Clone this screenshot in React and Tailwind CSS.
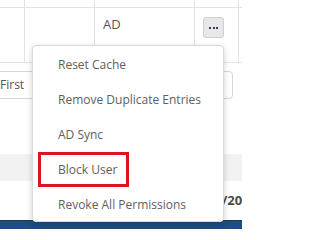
import React from "react"

const menuItems = ['Reset Cache', 'Remove Duplicate Entries', 'AD Sync', 'Block User', 'Revoke All Permissions']

function ActionsMenu() {
    return (
        <div className="absolute left-[32px] top-[45px] w-[192px] h-[177px] bg-white border border-[#d9d9d9] rounded-[4px] shadow-[0_2px_6px_rgba(0,0,0,0.18)] py-[1px]">
            {menuItems.map((label) => (
                <div key={label} className="h-[35px] flex items-center text-[12px] text-[#606060] whitespace-nowrap">
                    {label === 'Block User' ? (
                        <span className="ml-[5px] w-[91px] h-[35px] border-[3px] border-[#e0141e] flex items-center pl-[17px]">{label}</span>
                    ) : (
                        <span className="pl-[25px]">{label}</span>
                    )}
                </div>
            ))}
        </div>
    )
}

export default function App() {
    return (
        <main className="relative w-[242px] h-[229px] overflow-hidden bg-white font-['Open_Sans',sans-serif]">
            {/* table header edge */}
            <div className="flex h-[8px] border-b border-[#e3e3e3]">
                <div className="w-[25px] border-r border-[#e3e3e3]" />
                <div className="w-[70px] border-r border-[#e3e3e3]" />
                <div className="w-[100px] border-r border-[#e3e3e3]" />
                <div className="w-[44px] border-r border-[#e3e3e3]" />
            </div>
            {/* body row */}
            <div className="flex h-[55px] border-b border-[#e3e3e3]">
                <div className="w-[25px] border-r border-[#e3e3e3]" />
                <div className="w-[70px] border-r border-[#e3e3e3]" />
                <div className="w-[100px] border-r border-[#e3e3e3] pl-[8px] pt-[7px] text-[13px] leading-[18px] text-[#555]">AD</div>
                <div className="w-[44px] border-r border-[#e3e3e3] pl-[8px] pt-[9px]">
                    <button className="w-[21px] h-[21px] rounded-[3px] bg-[#e8e8e8] border border-[#cfcfcf] flex items-center justify-center gap-[1.5px]">
                        <span className="w-[2px] h-[2px] bg-[#3a3f55]" />
                        <span className="w-[2px] h-[2px] bg-[#3a3f55]" />
                        <span className="w-[2px] h-[2px] bg-[#3a3f55]" />
                    </button>
                </div>
            </div>
            {/* filter input */}
            <div className="mt-[8px] ml-[-8px] w-[241px] h-[28px] border border-[#d6d6d6] rounded-r-[4px] flex items-center pl-[7px] text-[12px] text-[#555]">First</div>
            {/* header band */}
            <div className="mt-[55px] h-[27px] bg-[#f2f2f2]" />
            <div className="h-[39px] pl-[222px] pt-[10px] text-[13px] leading-[18px] font-bold text-[#4a4a4a] whitespace-nowrap">/20</div>
            <div className="h-[9px] bg-[#1d4e7f] border-t border-[#263a50]" />
            <ActionsMenu />
        </main>
    )
}
